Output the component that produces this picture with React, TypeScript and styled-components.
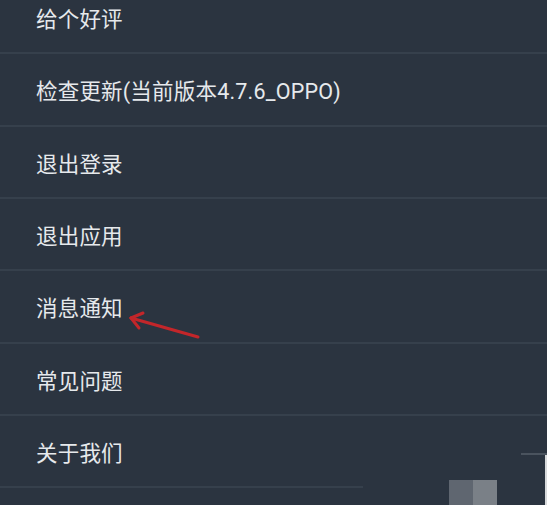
import styled, { createGlobalStyle } from "styled-components";

const GlobalStyle = createGlobalStyle`
  html, body {
    margin: 0;
    padding: 0;
    background: #2b3440;
  }
  body {
    width: 547px;
    height: 505px;
    overflow: hidden;
    font-family: Roboto, "Noto Sans CJK SC", "Noto Sans", sans-serif;
  }
`;

const Page = styled.div`
  position: relative;
  width: 547px;
  height: 505px;
  overflow: hidden;
  background: #2b3440;
`;

const MenuList = styled.ul`
  list-style: none;
  display: flex;
  flex-direction: column;
  margin: -18px 0 0;
  padding: 0;
`;

const MenuItem = styled.li<{ $lineWidth?: number }>`
  position: relative;
  box-sizing: border-box;
  height: 72.33px;
  flex: none;
  display: flex;
  align-items: center;
  padding: 0 0 1px 36px;
  color: #e6e9ec;
  font-size: 21.5px;
  letter-spacing: 0.2px;

  &::after {
    content: "";
    position: absolute;
    left: 0;
    bottom: 0;
    height: 2px;
    width: ${(p) => (p.$lineWidth ? `${p.$lineWidth}px` : "100%")};
    background: #36404c;
  }
`;

const Arrow = styled.svg`
  position: absolute;
  left: 0;
  top: 0;
  pointer-events: none;
`;

/* blurred leftovers of the screenshot in the lower right corner */
const Corner = styled.div`
  position: absolute;
  left: 449px;
  top: 453px;
  width: 98px;
  height: 52px;
  display: grid;
  grid-template-columns: 24px 24px 24px 24px 2px;
  grid-template-rows: 2px 25px 25px;
`;

const EdgeLine = styled.div`
  grid-column: 4 / 6;
  grid-row: 1;
  background: #4a535e;
`;

const EdgeBar = styled.div`
  grid-column: 5;
  grid-row: 2 / 4;
  background: #d8dadc;
`;

const Pixel = styled.div<{ $col: number; $color: string }>`
  grid-column: ${(p) => p.$col};
  grid-row: 3;
  background: ${(p) => p.$color};
`;

const items = [
  "给个好评",
  "检查更新(当前版本4.7.6_OPPO)",
  "退出登录",
  "退出应用",
  "消息通知",
  "常见问题",
  "关于我们",
];

export default function App() {
  return (
    <>
      <GlobalStyle />
      <Page>
        <MenuList>
          {items.map((label, i) => (
            <MenuItem key={label} $lineWidth={i === items.length - 1 ? 363 : undefined}>
              {label}
            </MenuItem>
          ))}
        </MenuList>
        <Arrow width="547" height="505" viewBox="0 0 547 505">
          <g stroke="#c3262a" strokeWidth="3" strokeLinecap="round" fill="none">
            <path d="M198 337 L131 318" />
            <path d="M131 318 L143 313" />
            <path d="M131 318 L139 328" />
          </g>
        </Arrow>
        <Corner>
          <EdgeLine />
          <EdgeBar />
          <Pixel $col={1} $color="#5f6670" />
          <Pixel $col={2} $color="#7a8087" />
        </Corner>
      </Page>
    </>
  );
}
